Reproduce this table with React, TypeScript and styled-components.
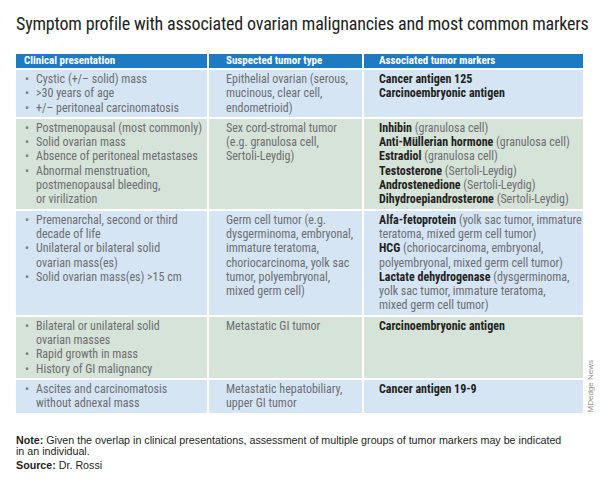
import React from "react";
import styled, { createGlobalStyle } from "styled-components";

const narrow =
  '"Roboto Condensed", "Liberation Sans Narrow", "Arial Narrow", "Liberation Sans", sans-serif';

const GlobalStyle = createGlobalStyle`
  body {
    margin: 0;
    background: #ffffff;
    font-family: ${narrow};
    font-stretch: condensed;
  }
`;

const Page = styled.div`
  width: 602px;
  height: 488px;
  box-sizing: border-box;
  padding: 13px 0 0 16px;
  overflow: hidden;
`;

const Title = styled.h1`
  margin: 0;
  font-family: ${narrow};
  font-stretch: condensed;
  font-size: 18px;
  line-height: 22px;
  font-weight: 400;
  letter-spacing: -0.18px;
  color: #231f20;
  white-space: nowrap;
`;

const TableArea = styled.div`
  display: flex;
  align-items: flex-end;
  gap: 3px;
  margin-top: 19px;
`;

const Table = styled.div`
  display: grid;
  grid-template-columns: 191px 153px 219px;
  gap: 2px;
  background: #ffffff;
`;

const HeadCell = styled.div<{ $pad: number }>`
  background: #1f7bc1;
  color: #ffffff;
  font-size: 11px;
  font-weight: 700;
  height: 14px;
  line-height: 14px;
  padding-left: ${(p) => p.$pad}px;
  white-space: nowrap;
`;

const Cell = styled.div<{ $tone: "blue" | "green"; $pad: number }>`
  background: ${(p) => (p.$tone === "blue" ? "#d5e5f4" : "#d6e3d9")};
  padding: 2px 0 2px ${(p) => p.$pad}px;
  color: #6d6e71;
  font-size: 12px;
  line-height: 14.3px;
`;

const Item = styled.div`
  display: flex;
`;

const Dot = styled.span`
  flex: 0 0 11px;
  color: #7a7b7e;
`;

const Line = styled.div`
  white-space: nowrap;
`;

const Marker = styled.span`
  color: #231f20;
  font-weight: 700;
`;

const Credit = styled.div`
  writing-mode: vertical-rl;
  transform: rotate(180deg);
  font-family: "Liberation Sans", Arial, sans-serif;
  font-stretch: normal;
  font-size: 8px;
  line-height: 9px;
  color: #8c8c8c;
  white-space: nowrap;
`;

const Notes = styled.div`
  margin-top: 22px;
  color: #231f20;
  font-family: "Liberation Sans", Arial, sans-serif;
  font-stretch: normal;
  font-size: 10.7px;
  line-height: 11.5px;
  width: 556px;
`;

const NoteLine = styled.p<{ $gap?: number }>`
  margin: ${(p) => p.$gap ?? 0}px 0 0;
`;

const Label = styled.span`
  font-weight: 700;
`;

type Tone = "blue" | "green";

type Row = {
  tone: Tone;
  presentation: string[][];
  tumor: string[];
  markers: [string, string][];
};

const rows: Row[] = [
  {
    tone: "blue",
    presentation: [
      ["Cystic (+/– solid) mass"],
      [">30 years of age"],
      ["+/– peritoneal carcinomatosis"],
    ],
    tumor: ["Epithelial ovarian (serous,", "mucinous, clear cell,", "endometrioid)"],
    markers: [
      ["Cancer antigen 125", ""],
      ["Carcinoembryonic antigen", ""],
    ],
  },
  {
    tone: "green",
    presentation: [
      ["Postmenopausal (most commonly)"],
      ["Solid ovarian mass"],
      ["Absence of peritoneal metastases"],
      ["Abnormal menstruation,", "postmenopausal bleeding,", "or virilization"],
    ],
    tumor: ["Sex cord-stromal tumor", "(e.g. granulosa cell,", "Sertoli-Leydig)"],
    markers: [
      ["Inhibin", " (granulosa cell)"],
      ["Anti-Müllerian hormone", " (granulosa cell)"],
      ["Estradiol", " (granulosa cell)"],
      ["Testosterone", " (Sertoli-Leydig)"],
      ["Androstenedione", " (Sertoli-Leydig)"],
      ["Dihydroepiandrosterone", " (Sertoli-Leydig)"],
    ],
  },
  {
    tone: "blue",
    presentation: [
      ["Premenarchal, second or third", "decade of life"],
      ["Unilateral or bilateral solid", "ovarian mass(es)"],
      ["Solid ovarian mass(es) >15 cm"],
    ],
    tumor: [
      "Germ cell tumor (e.g.",
      "dysgerminoma, embryonal,",
      "immature teratoma,",
      "choriocarcinoma, yolk sac",
      "tumor, polyembryonal,",
      "mixed germ cell)",
    ],
    markers: [
      ["Alfa-fetoprotein", " (yolk sac tumor, immature"],
      ["", "teratoma, mixed germ cell tumor)"],
      ["HCG", " (choriocarcinoma, embryonal,"],
      ["", "polyembryonal, mixed germ cell tumor)"],
      ["Lactate dehydrogenase", " (dysgerminoma,"],
      ["", "yolk sac tumor, immature teratoma,"],
      ["", "mixed germ cell tumor)"],
    ],
  },
  {
    tone: "green",
    presentation: [
      ["Bilateral or unilateral solid", "ovarian masses"],
      ["Rapid growth in mass"],
      ["History of GI malignancy"],
    ],
    tumor: ["Metastatic GI tumor"],
    markers: [["Carcinoembryonic antigen", ""]],
  },
  {
    tone: "blue",
    presentation: [["Ascites and carcinomatosis", "without adnexal mass"]],
    tumor: ["Metastatic hepatobiliary,", "upper GI tumor"],
    markers: [["Cancer antigen 19-9", ""]],
  },
];

export default function App() {
  return (
    <Page>
      <GlobalStyle />
      <Title>
        Symptom profile with associated ovarian malignancies and most common markers
      </Title>

      <TableArea>
        <Table>
          <HeadCell $pad={8}>Clinical presentation</HeadCell>
          <HeadCell $pad={17}>Suspected tumor type</HeadCell>
          <HeadCell $pad={15}>Associated tumor markers</HeadCell>

          {rows.map((row, i) => (
            <React.Fragment key={i}>
              <Cell $tone={row.tone} $pad={9}>
                {row.presentation.map((item, j) => (
                  <Item key={j}>
                    <Dot>•</Dot>
                    <div>
                      {item.map((text, k) => (
                        <Line key={k}>{text}</Line>
                      ))}
                    </div>
                  </Item>
                ))}
              </Cell>
              <Cell $tone={row.tone} $pad={17}>
                {row.tumor.map((text, k) => (
                  <Line key={k}>{text}</Line>
                ))}
              </Cell>
              <Cell $tone={row.tone} $pad={15}>
                {row.markers.map(([name, rest], k) => (
                  <Line key={k}>
                    {name && <Marker>{name}</Marker>}
                    {rest}
                  </Line>
                ))}
              </Cell>
            </React.Fragment>
          ))}
        </Table>
        <Credit>MDedge News</Credit>
      </TableArea>

      <Notes>
        <NoteLine>
          <Label>Note:</Label> Given the overlap in clinical presentations, assessment of
          multiple groups of tumor markers may be indicated in an individual.
        </NoteLine>
        <NoteLine $gap={2}>
          <Label>Source:</Label> Dr. Rossi
        </NoteLine>
      </Notes>
    </Page>
  );
}
